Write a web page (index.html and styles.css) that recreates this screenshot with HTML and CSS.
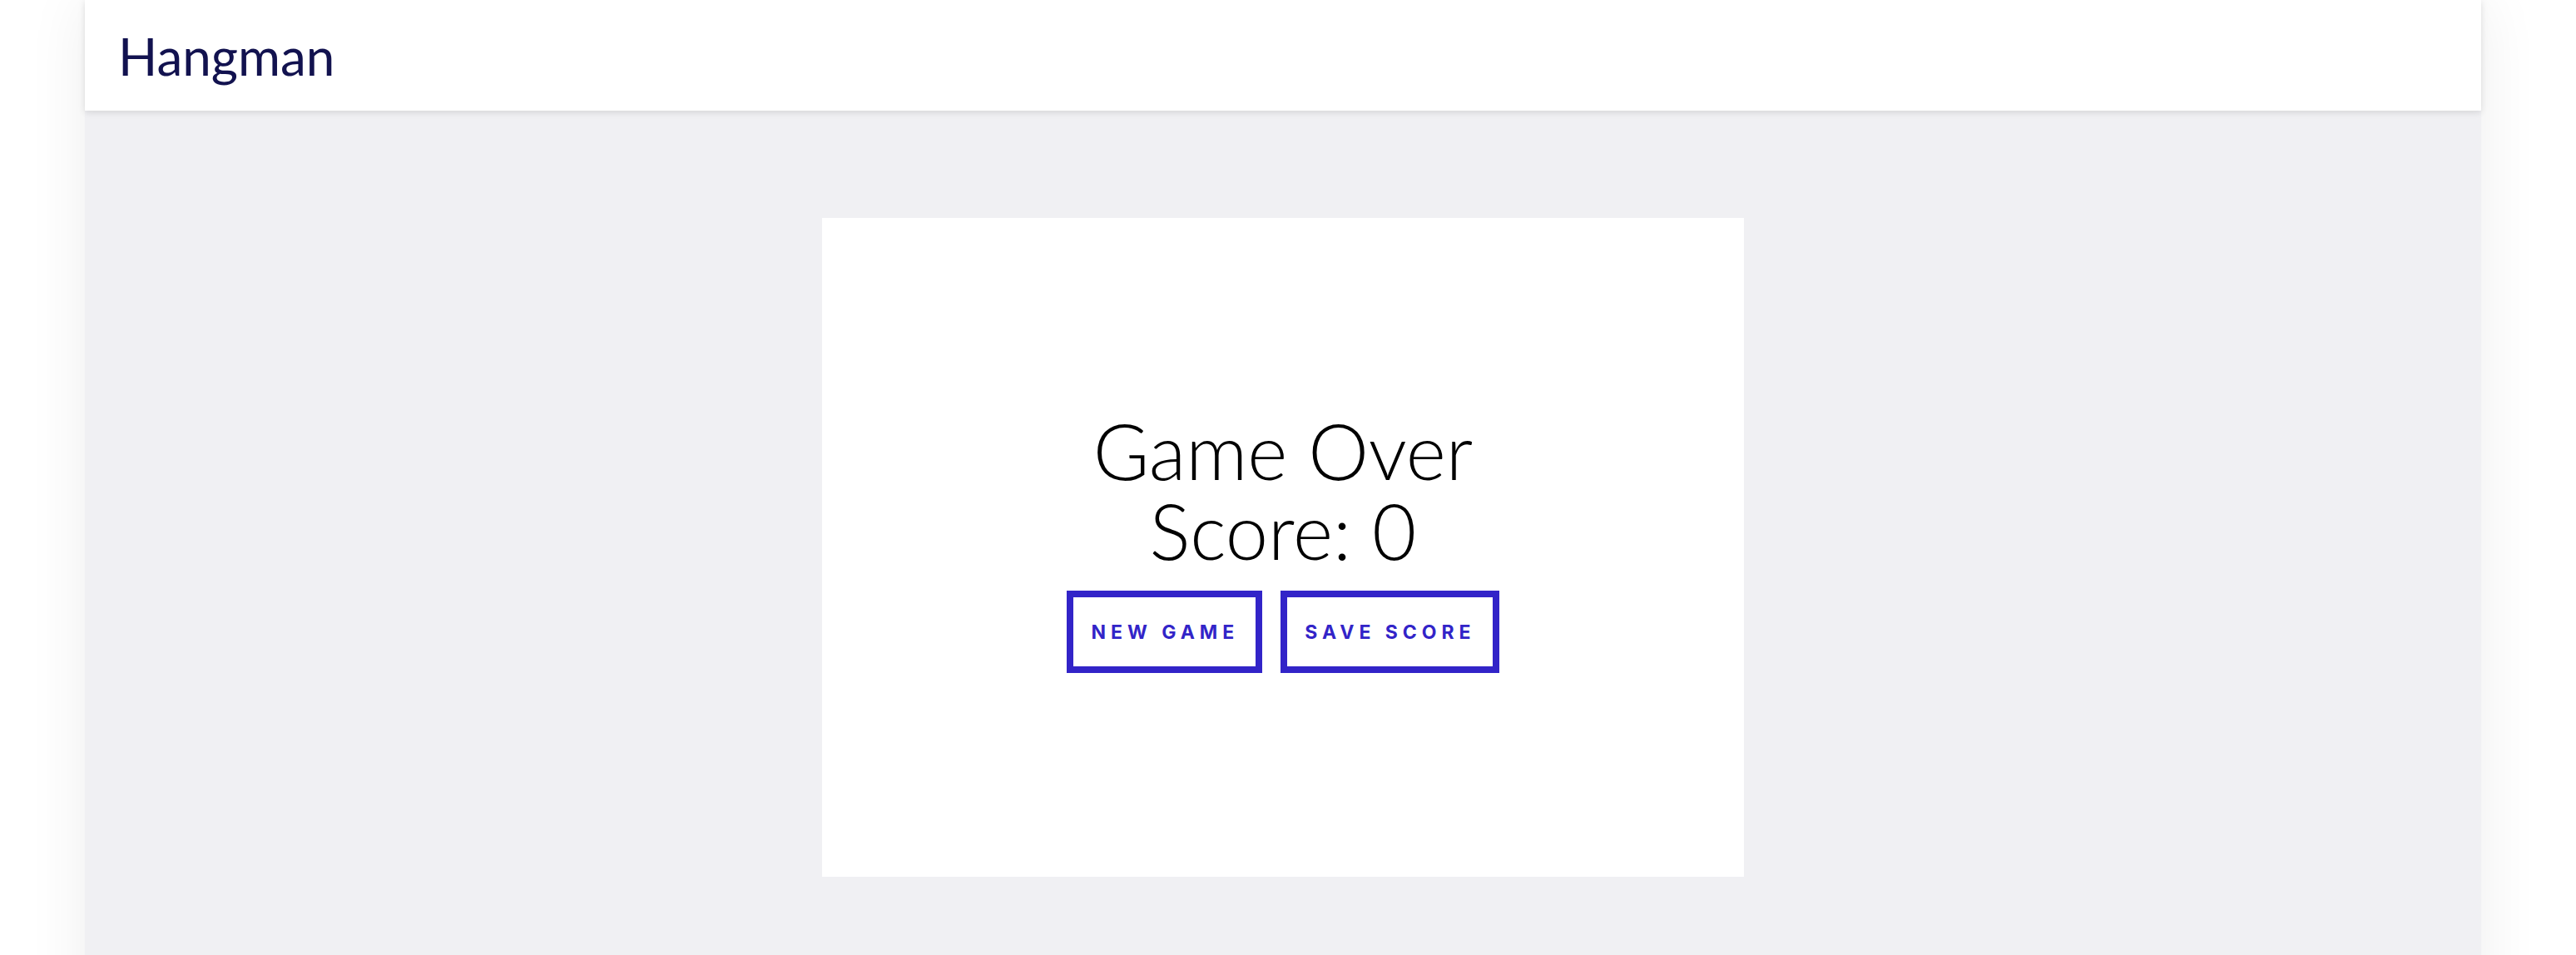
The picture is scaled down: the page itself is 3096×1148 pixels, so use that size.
FILE: index.html
```html
<!DOCTYPE html>
<html lang="en">
<head>
<meta charset="utf-8">
<title>Hangman</title>
<link rel="stylesheet" href="styles.css">
</head>
<body>
<div class="app">
  <header class="topbar">
    <h1 class="brand">Hangman</h1>
  </header>
  <main class="stage">
    <section class="card">
      <p class="result">Game Over<br>Score: 0</p>
      <div class="actions">
        <button class="btn" type="button">New Game</button>
        <button class="btn" type="button">Save Score</button>
      </div>
    </section>
  </main>
</div>
</body>
</html>
```
FILE: styles.css
```css
html, body {
  margin: 0;
  padding: 0;
  background: #ffffff;
}
body {
  font-family: "Lato", "Noto Sans", sans-serif;
}
.app {
  width: 2880px;
  margin-left: 102px;
  min-height: 1300px;
  background: #f0f0f3;
  box-shadow: 0 0 70px rgba(0, 0, 0, 0.07);
}
.topbar {
  height: 133px;
  background: #ffffff;
  box-shadow: 0 2px 8px rgba(0, 0, 0, 0.12);
  display: flex;
  align-items: center;
  padding-left: 40px;
  position: relative;
}
.brand {
  margin: 0;
  font-family: "Lato", sans-serif;
  font-weight: 400;
  font-size: 62px;
  color: #12124f;
  line-height: 1;
}
.stage {
  padding-top: 129px;
  display: flex;
  justify-content: center;
}
.card {
  width: 1108px;
  height: 792px;
  background: #ffffff;
  display: flex;
  flex-direction: column;
  align-items: center;
  justify-content: center;
}
.result {
  margin: 0;
  text-align: center;
  font-family: "Lato", sans-serif;
  font-weight: 300;
  font-size: 92px;
  line-height: 96px;
  color: #000000;
}
.actions {
  display: flex;
  gap: 22px;
  margin-top: 24px;
  margin-bottom: 13px;
}
.btn {
  background: #ffffff;
  border: 8px solid #3224c8;
  color: #3224c8;
  font-family: "Inter", "Roboto", sans-serif;
  font-weight: 700;
  font-size: 23px;
  letter-spacing: 0.26em;
  text-transform: uppercase;
  padding: 0 20px 0 21px;
  height: 99px;
  cursor: pointer;
}
```
